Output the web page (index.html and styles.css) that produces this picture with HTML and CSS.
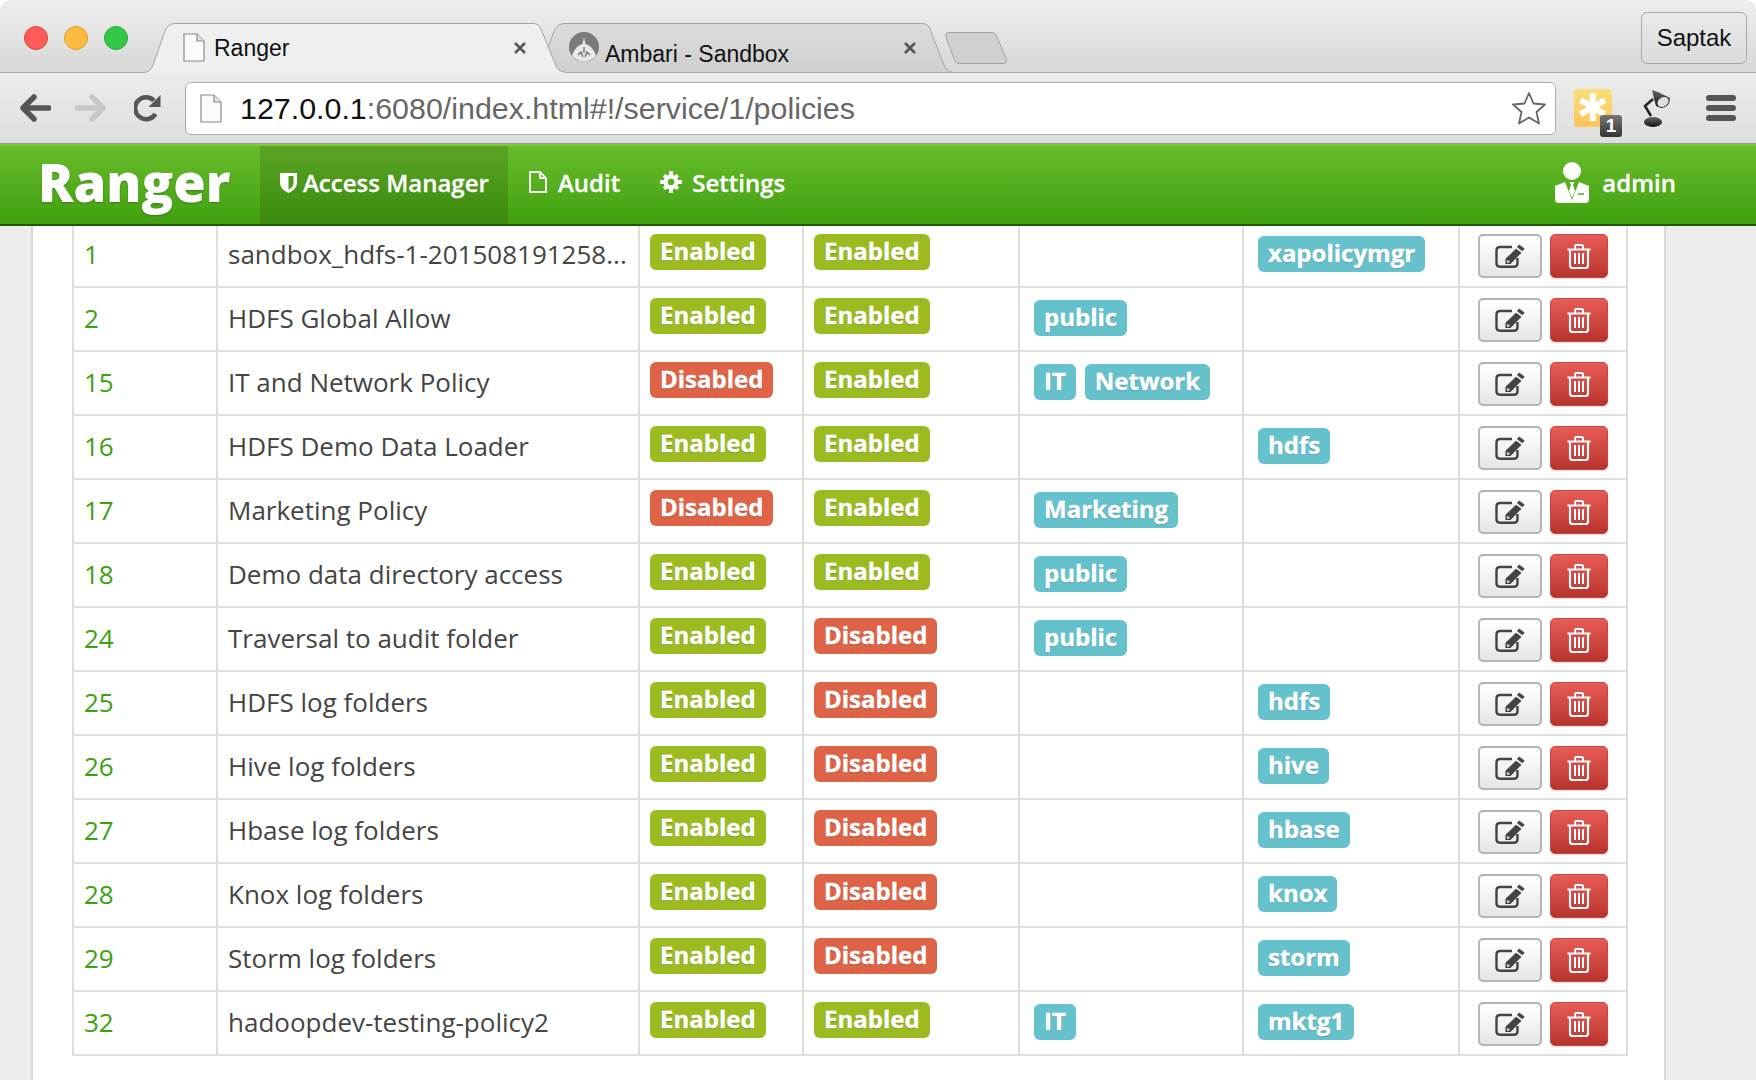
FILE: index.html
```html
<!DOCTYPE html>
<html lang="en">

<head>
    <meta charset="UTF-8">
    <meta name="viewport" content="width=device-width, initial-scale=1.0">
    <title>Ranger</title>
    <link rel="stylesheet" href="styles.css">
</head>

<body>

    <!-- Shared icons -->
    <svg class="icon-defs" width="0" height="0">
        <symbol id="icon-page" viewBox="0 0 22 29">
            <path d="M1 1H14L21 8V28H1Z" fill="#fbfbfb" stroke="#8a8a8a" stroke-width="1.2" />
            <path d="M14 1V8H21" fill="#e4e4e4" stroke="#8a8a8a" stroke-width="1.2" />
        </symbol>
        <symbol id="icon-close" viewBox="0 0 14 14">
            <path d="M2 2L12 12M12 2L2 12" stroke="#555" stroke-width="2.6" />
        </symbol>
        <symbol id="icon-edit" viewBox="0 0 30 24">
            <path d="M17 3H5Q1.500 3 1.500 6.500V19Q1.500 22.700 5 22.700H19Q22.500 22.700 22.500 19V14" fill="none" stroke="#444" stroke-width="2.400" />
            <path d="M24 0.500L29.500 4.500L27.500 7.300L22 3.300ZM21 4.700L26.500 8.700L15.500 20H10.500V14.800Z" fill="#444" />
            <path d="M12.300 15.800L14.800 17.700L13.800 18.700H12.300Z" fill="#fff" />
        </symbol>
        <symbol id="icon-trash" viewBox="0 0 24 25">
            <path d="M0.500 5.500H23.500M8 5V2.500Q8 1 9.500 1H14.500Q16 1 16 2.500V5" fill="none" stroke="#fff" stroke-width="2" />
            <path d="M3 6V21.500Q3 24 5.500 24H18.500Q21 24 21 21.500V6" fill="none" stroke="#fff" stroke-width="2.200" />
            <path d="M8 9V20M12 9V20M16 9V20" stroke="#fff" stroke-width="2" />
        </symbol>
    </svg>

    <!-- Tab strip -->
    <div class="tab-strip">
        <div class="window-buttons">
            <span class="dot dot-red"></span>
            <span class="dot dot-yellow"></span>
            <span class="dot dot-green"></span>
        </div>
        <div class="tabs">
            <div class="tab tab-active">
                <svg class="tab-shape" viewBox="0 0 420 50" preserveAspectRatio="none">
                    <path d="M0 49H1Q5 49 8 42L20 8Q23 0.500 30 0.500H388Q394 0.500 396 6L411 43Q414 49 420 49V50H0Z" fill="#efefef" />
                    <path d="M0 49H1Q5 49 8 42L20 8Q23 0.500 30 0.500H388Q394 0.500 396 6L411 43Q414 49 420 49" fill="none" stroke="#a2a2a2" />
                </svg>
                <svg class="tab-icon"><use href="#icon-page" /></svg>
                <span class="tab-title">Ranger</span>
                <svg class="tab-close"><use href="#icon-close" /></svg>
            </div>
            <div class="tab tab-other">
                <svg class="tab-shape" viewBox="0 0 422 49" preserveAspectRatio="none">
                    <defs>
                        <linearGradient id="tab-fill" x1="0" y1="0" x2="0" y2="1">
                            <stop offset="0" stop-color="#dcdcdc" />
                            <stop offset="1" stop-color="#cfcfcf" />
                        </linearGradient>
                    </defs>
                    <path d="M0 49H3Q9 49 12 42L24 8Q27 0.500 35 0.500H392Q398 0.500 400 6L414 42Q417 49 422 49" fill="url(#tab-fill)" stroke="#a2a2a2" />
                </svg>
                <svg class="tab-favicon" viewBox="0 0 30 30">
                    <circle cx="15" cy="15" r="15" fill="#7b7b7b" />
                    <path d="M15 5L16.500 12Q24 14 27 24Q22 29 15 30Q8 29 3 24Q6 14 13.500 12Z" fill="#e9e9e9" />
                    <path d="M15 15V21M9 23L12 20L14 25M21 23L18 20L16 25" stroke="#7b7b7b" stroke-width="1.500" fill="none" />
                </svg>
                <span class="tab-title tab-title-low">Ambari - Sandbox</span>
                <svg class="tab-close"><use href="#icon-close" /></svg>
            </div>
            <div class="new-tab">
                <svg viewBox="0 0 62 32" width="62" height="32">
                    <path d="M4 0.500H47Q50 0.500 51.500 4L61 26Q62.500 31.500 58 31.500H15Q11 31.500 9.500 28L1 5Q0 0.500 4 0.500Z" fill="#d0d0d0" stroke="#a2a2a2" />
                </svg>
            </div>
        </div>
        <div class="profile-button">Saptak</div>
    </div>

    <!-- Toolbar -->
    <div class="toolbar">
        <svg class="nav-icon" viewBox="0 0 31 28" width="31" height="28">
            <path d="M14 3L3 14L14 25M4 14H29" fill="none" stroke="#555" stroke-width="5.500" stroke-linecap="round" stroke-linejoin="round" />
        </svg>
        <svg class="nav-icon" viewBox="0 0 31 28" width="31" height="28">
            <path d="M17 3L28 14L17 25M27 14H2" fill="none" stroke="#c8c8c8" stroke-width="5.500" stroke-linecap="round" stroke-linejoin="round" />
        </svg>
        <svg class="nav-icon" viewBox="0 0 27 28" width="27" height="28">
            <path d="M21.500 20A11 11 0 1 1 20 6.500" fill="none" stroke="#555" stroke-width="4.500" />
            <path d="M26.500 1V13H14.500Z" fill="#555" />
        </svg>
        <div class="omnibox">
            <svg class="omni-page"><use href="#icon-page" /></svg>
            <span class="url"><span class="url-host">127.0.0.1</span>:6080/index.html#!/service/1/policies</span>
            <svg class="star" viewBox="0 0 36 34" width="36" height="34">
                <path d="M18 2L22.500 12.500L34 13.500L25.500 21L28 32.500L18 26.500L8 32.500L10.500 21L2 13.500L13.500 12.500Z" fill="#fff" stroke="#666" stroke-width="1.800" stroke-linejoin="round" />
            </svg>
        </div>
        <div class="extension">
            <span class="ext-star">✱</span>
            <span class="ext-badge">1</span>
        </div>
        <svg class="lamp" viewBox="0 0 27 38" width="27" height="38">
            <defs>
                <linearGradient id="lamp-fill" x1="0" y1="0" x2="0" y2="1">
                    <stop offset="0" stop-color="#666" />
                    <stop offset="1" stop-color="#111" />
                </linearGradient>
            </defs>
            <path d="M9 1L15 3L27 9Q27 18 18 19L13 17L11 10Z" fill="url(#lamp-fill)" />
            <ellipse cx="20" cy="13" rx="6" ry="4.500" fill="#ddd" transform="rotate(-35 20 13)" />
            <path d="M10 10L2 17L8 27" fill="none" stroke="#222" stroke-width="2.500" />
            <ellipse cx="10" cy="33" rx="9" ry="5" fill="url(#lamp-fill)" />
        </svg>
        <div class="menu-button">
            <span></span>
            <span></span>
            <span></span>
        </div>
    </div>

    <!-- Ranger nav bar -->
    <div class="navbar">
        <div class="brand">Ranger</div>
        <a class="nav-item nav-item-active">
            <svg viewBox="0 0 17 21" width="17" height="21">
                <path d="M0 1H17V11Q17 17 8.500 21Q0 17 0 11Z" fill="#fff" />
                <path d="M8.500 4H13.500V11Q13.500 15 8.500 17.500Z" fill="#4c9a18" />
            </svg>
            Access Manager
        </a>
        <a class="nav-item">
            <svg viewBox="0 0 18 22" width="18" height="22">
                <path d="M1 1H11L17 7V21H1Z M11 1V7H17" fill="none" stroke="#fff" stroke-width="1.800" />
            </svg>
            Audit
        </a>
        <a class="nav-item">
            <svg viewBox="0 0 22 22" width="22" height="22">
                <path d="M11 3.500A7.500 7.500 0 1 0 11 18.500A7.500 7.500 0 1 0 11 3.500ZM11 7.800A3.200 3.200 0 1 1 11 14.200A3.200 3.200 0 1 1 11 7.800Z" fill="#fff" fill-rule="evenodd" />
                <path d="M9 0H13V4H9ZM9 18H13V22H9ZM0 9H4V13H0ZM18 9H22V13H18ZM2.800 5.600L5.600 2.800L8 5.500L5.500 8ZM14 16.500L16.500 14L19.200 16.400L16.400 19.200ZM16.400 2.800L19.200 5.600L16.500 8L14 5.500ZM5.500 14L8 16.500L5.600 19.200L2.800 16.400Z" fill="#fff" />
            </svg>
            Settings
        </a>
        <div class="nav-user">
            <svg viewBox="0 0 34 41" width="34" height="41">
                <circle cx="17" cy="9" r="9" fill="#fff" />
                <path d="M10 20L0 24Q0 24 0 28V37Q0 41 4 41H30Q34 41 34 37V28Q34 24 34 24L24 20L17 38Z" fill="#fff" />
                <path d="M14.500 20H19.500L18 23L20 29L17 36L14 29L16 23Z" fill="#fff" />
                <path d="M23 32H29" stroke="#4fa916" stroke-width="1.500" />
            </svg>
            admin
        </div>
    </div>

    <!-- Policy list -->
    <div class="page">
        <div class="panel">
            <table class="policy-table">
                <colgroup>
                    <col class="col-id">
                    <col class="col-name">
                    <col class="col-status">
                    <col class="col-audit">
                    <col class="col-groups">
                    <col class="col-users">
                    <col class="col-actions">
                </colgroup>
                <tbody>
                    <tr>
                        <td class="policy-id">1</td>
                        <td>sandbox_hdfs-1-201508191258...</td>
                        <td class="status"><span class="label label-on">Enabled</span></td>
                        <td class="status"><span class="label label-on">Enabled</span></td>
                        <td class="tags"></td>
                        <td class="tags"><span class="label label-tag">xapolicymgr</span></td>
                        <td class="actions"><div class="action-group"><button class="btn btn-edit"><svg><use href="#icon-edit" /></svg></button><button class="btn btn-delete"><svg><use href="#icon-trash" /></svg></button></div></td>
                    </tr>
                    <tr>
                        <td class="policy-id">2</td>
                        <td>HDFS Global Allow</td>
                        <td class="status"><span class="label label-on">Enabled</span></td>
                        <td class="status"><span class="label label-on">Enabled</span></td>
                        <td class="tags"><span class="label label-tag">public</span></td>
                        <td class="tags"></td>
                        <td class="actions"><div class="action-group"><button class="btn btn-edit"><svg><use href="#icon-edit" /></svg></button><button class="btn btn-delete"><svg><use href="#icon-trash" /></svg></button></div></td>
                    </tr>
                    <tr>
                        <td class="policy-id">15</td>
                        <td>IT and Network Policy</td>
                        <td class="status"><span class="label label-off">Disabled</span></td>
                        <td class="status"><span class="label label-on">Enabled</span></td>
                        <td class="tags"><span class="label label-tag">IT</span><span class="label label-tag">Network</span></td>
                        <td class="tags"></td>
                        <td class="actions"><div class="action-group"><button class="btn btn-edit"><svg><use href="#icon-edit" /></svg></button><button class="btn btn-delete"><svg><use href="#icon-trash" /></svg></button></div></td>
                    </tr>
                    <tr>
                        <td class="policy-id">16</td>
                        <td>HDFS Demo Data Loader</td>
                        <td class="status"><span class="label label-on">Enabled</span></td>
                        <td class="status"><span class="label label-on">Enabled</span></td>
                        <td class="tags"></td>
                        <td class="tags"><span class="label label-tag">hdfs</span></td>
                        <td class="actions"><div class="action-group"><button class="btn btn-edit"><svg><use href="#icon-edit" /></svg></button><button class="btn btn-delete"><svg><use href="#icon-trash" /></svg></button></div></td>
                    </tr>
                    <tr>
                        <td class="policy-id">17</td>
                        <td>Marketing Policy</td>
                        <td class="status"><span class="label label-off">Disabled</span></td>
                        <td class="status"><span class="label label-on">Enabled</span></td>
                        <td class="tags"><span class="label label-tag">Marketing</span></td>
                        <td class="tags"></td>
                        <td class="actions"><div class="action-group"><button class="btn btn-edit"><svg><use href="#icon-edit" /></svg></button><button class="btn btn-delete"><svg><use href="#icon-trash" /></svg></button></div></td>
                    </tr>
                    <tr>
                        <td class="policy-id">18</td>
                        <td>Demo data directory access</td>
                        <td class="status"><span class="label label-on">Enabled</span></td>
                        <td class="status"><span class="label label-on">Enabled</span></td>
                        <td class="tags"><span class="label label-tag">public</span></td>
                        <td class="tags"></td>
                        <td class="actions"><div class="action-group"><button class="btn btn-edit"><svg><use href="#icon-edit" /></svg></button><button class="btn btn-delete"><svg><use href="#icon-trash" /></svg></button></div></td>
                    </tr>
                    <tr>
                        <td class="policy-id">24</td>
                        <td>Traversal to audit folder</td>
                        <td class="status"><span class="label label-on">Enabled</span></td>
                        <td class="status"><span class="label label-off">Disabled</span></td>
                        <td class="tags"><span class="label label-tag">public</span></td>
                        <td class="tags"></td>
                        <td class="actions"><div class="action-group"><button class="btn btn-edit"><svg><use href="#icon-edit" /></svg></button><button class="btn btn-delete"><svg><use href="#icon-trash" /></svg></button></div></td>
                    </tr>
                    <tr>
                        <td class="policy-id">25</td>
                        <td>HDFS log folders</td>
                        <td class="status"><span class="label label-on">Enabled</span></td>
                        <td class="status"><span class="label label-off">Disabled</span></td>
                        <td class="tags"></td>
                        <td class="tags"><span class="label label-tag">hdfs</span></td>
                        <td class="actions"><div class="action-group"><button class="btn btn-edit"><svg><use href="#icon-edit" /></svg></button><button class="btn btn-delete"><svg><use href="#icon-trash" /></svg></button></div></td>
                    </tr>
                    <tr>
                        <td class="policy-id">26</td>
                        <td>Hive log folders</td>
                        <td class="status"><span class="label label-on">Enabled</span></td>
                        <td class="status"><span class="label label-off">Disabled</span></td>
                        <td class="tags"></td>
                        <td class="tags"><span class="label label-tag">hive</span></td>
                        <td class="actions"><div class="action-group"><button class="btn btn-edit"><svg><use href="#icon-edit" /></svg></button><button class="btn btn-delete"><svg><use href="#icon-trash" /></svg></button></div></td>
                    </tr>
                    <tr>
                        <td class="policy-id">27</td>
                        <td>Hbase log folders</td>
                        <td class="status"><span class="label label-on">Enabled</span></td>
                        <td class="status"><span class="label label-off">Disabled</span></td>
                        <td class="tags"></td>
                        <td class="tags"><span class="label label-tag">hbase</span></td>
                        <td class="actions"><div class="action-group"><button class="btn btn-edit"><svg><use href="#icon-edit" /></svg></button><button class="btn btn-delete"><svg><use href="#icon-trash" /></svg></button></div></td>
                    </tr>
                    <tr>
                        <td class="policy-id">28</td>
                        <td>Knox log folders</td>
                        <td class="status"><span class="label label-on">Enabled</span></td>
                        <td class="status"><span class="label label-off">Disabled</span></td>
                        <td class="tags"></td>
                        <td class="tags"><span class="label label-tag">knox</span></td>
                        <td class="actions"><div class="action-group"><button class="btn btn-edit"><svg><use href="#icon-edit" /></svg></button><button class="btn btn-delete"><svg><use href="#icon-trash" /></svg></button></div></td>
                    </tr>
                    <tr>
                        <td class="policy-id">29</td>
                        <td>Storm log folders</td>
                        <td class="status"><span class="label label-on">Enabled</span></td>
                        <td class="status"><span class="label label-off">Disabled</span></td>
                        <td class="tags"></td>
                        <td class="tags"><span class="label label-tag">storm</span></td>
                        <td class="actions"><div class="action-group"><button class="btn btn-edit"><svg><use href="#icon-edit" /></svg></button><button class="btn btn-delete"><svg><use href="#icon-trash" /></svg></button></div></td>
                    </tr>
                    <tr>
                        <td class="policy-id">32</td>
                        <td>hadoopdev-testing-policy2</td>
                        <td class="status"><span class="label label-on">Enabled</span></td>
                        <td class="status"><span class="label label-on">Enabled</span></td>
                        <td class="tags"><span class="label label-tag">IT</span></td>
                        <td class="tags"><span class="label label-tag">mktg1</span></td>
                        <td class="actions"><div class="action-group"><button class="btn btn-edit"><svg><use href="#icon-edit" /></svg></button><button class="btn btn-delete"><svg><use href="#icon-trash" /></svg></button></div></td>
                    </tr>
                </tbody>
            </table>
        </div>
    </div>

</body>

</html>
```

FILE: styles.css
```css
/* Basic reset */
* {
    margin: 0;
    padding: 0;
    box-sizing: border-box;
}

body {
    display: flex;
    flex-direction: column;
    height: 100vh;
    overflow: hidden;
    background-color: #fff;
    font-family: "Open Sans", sans-serif;
    color: #444;
}

.icon-defs {
    position: absolute;
}

/* Tab strip */
.tab-strip {
    position: relative;
    z-index: 1;
    display: flex;
    flex: 0 0 72px;
    height: 72px;
    background: linear-gradient(#eeeeee, #d8d8d8);
    border-radius: 10px 10px 0 0;
    font-family: "Liberation Sans", Arial, sans-serif;
    color: #111;
}

.window-buttons {
    display: flex;
    gap: 16px;
    width: 145px;
    padding: 26px 0 0 24px;
}

.dot {
    width: 24px;
    height: 24px;
    border-radius: 50%;
}

.dot-red {
    background-color: #fc5b57;
    border: 1px solid #e0443e;
}

.dot-yellow {
    background-color: #fdbc40;
    border: 1px solid #de9f34;
}

.dot-green {
    background-color: #33c748;
    border: 1px solid #27aa35;
}

.tabs {
    display: flex;
    flex: 1;
    padding-top: 23px;
}

.tab {
    position: relative;
    display: flex;
    align-items: center;
    height: 49px;
}

.tab-shape {
    position: absolute;
    top: 0;
    left: 0;
    width: 100%;
    height: 100%;
}

.tab-active {
    z-index: 2;
    width: 420px;
    height: 50px;
    padding: 0 5px 1px 38px;
}

.tab-other {
    z-index: 1;
    width: 422px;
    margin-left: -35px;
    padding-left: 39px;
}

.tab-icon {
    position: relative;
    width: 22px;
    height: 29px;
    margin-right: 9px;
}

.tab-favicon {
    position: relative;
    width: 30px;
    height: 30px;
    margin: -2px 6px 0 0;
}

.tab-title {
    position: relative;
    flex: 1;
    font-size: 23px;
    line-height: 28px;
}

.tab-title-low {
    top: 6px;
}

.tab-close {
    position: relative;
    flex: none;
    width: 14px;
    height: 14px;
    margin-right: 33px;
}

.tab-other .tab-close {
    margin-right: 35px;
}

.new-tab {
    height: 32px;
    margin: 9px 0 0 -7px;
}

.profile-button {
    flex: none;
    align-self: flex-start;
    width: 106px;
    height: 52px;
    margin: 12px 9px 0 0;
    border: 1px solid #a8a8a8;
    border-radius: 6px;
    font-size: 24px;
    line-height: 50px;
    text-align: center;
}

/* Toolbar */
.toolbar {
    display: flex;
    flex: 0 0 72px;
    align-items: center;
    height: 72px;
    padding-left: 20px;
    background: linear-gradient(#ececec, #dedede);
    border-top: 1px solid #a8a8a8;
    border-bottom: 1px solid #9c9c9c;
    font-family: "Liberation Sans", Arial, sans-serif;
}

.nav-icon {
    flex: none;
    margin-right: 24px;
}

.nav-icon + .nav-icon + .nav-icon {
    margin-right: 24px;
    margin-left: 4px;
}

.omnibox {
    display: flex;
    align-items: center;
    width: 1371px;
    height: 53px;
    padding: 0 8px 0 14px;
    background-color: #fff;
    border: 1px solid #acacac;
    border-radius: 6px;
}

.omni-page {
    flex: none;
    width: 22px;
    height: 29px;
    margin-right: 18px;
}

.url {
    flex: 1;
    font-size: 30.4px;
    color: #666;
}

.url-host {
    color: #111;
}

.extension {
    position: relative;
    width: 38px;
    height: 38px;
    margin-left: 18px;
    background: linear-gradient(#f8df7a, #fdc45a);
    border-radius: 3px;
    overflow: visible;
    color: #fff;
    text-align: center;
}

.ext-star {
    font-family: "DejaVu Sans", sans-serif;
    font-size: 38px;
    line-height: 38px;
}

.ext-badge {
    position: absolute;
    right: -10px;
    bottom: -10px;
    width: 22px;
    height: 22px;
    background: linear-gradient(#777, #333);
    border-radius: 3px;
    font-size: 19px;
    font-weight: bold;
    line-height: 22px;
}

.lamp {
    flex: none;
    margin-left: 31px;
}

.menu-button {
    display: flex;
    flex-direction: column;
    gap: 4px;
    width: 30px;
    margin-left: 36px;
}

.menu-button span {
    height: 6px;
    background-color: #555;
    border-radius: 3px;
}

/* Ranger nav bar */
.navbar {
    display: flex;
    flex: 0 0 82px;
    height: 82px;
    background: linear-gradient(#68bc2a, #41a010);
    border-top: 2px solid #7ccb3c;
    border-bottom: 2px solid #1f5a03;
    color: #fff;
}

.brand {
    width: 260px;
    padding-left: 38px;
    font-family: "Open Sans", sans-serif;
    font-size: 52.5px;
    font-weight: 800;
    line-height: 72px;
    text-shadow: 0 1px 2px rgba(0, 0, 0, 0.25);
}

.nav-item {
    display: flex;
    align-items: center;
    gap: 6px;
    padding: 0 19px 6px;
    font-size: 24px;
    font-weight: 600;
    white-space: nowrap;
    -webkit-text-stroke: 0.3px #fff;
}

.nav-item + .nav-item {
    gap: 11px;
    padding-left: 21px;
}

.nav-item + .nav-item + .nav-item {
    gap: 10px;
}

.nav-item-active {
    width: 248px;
    padding-left: 20px;
    background: linear-gradient(#5aa424, #3a8a0d);
}

.nav-user {
    display: flex;
    align-items: center;
    gap: 13px;
    margin-left: auto;
    padding: 0 80px 6px 0;
    font-size: 24px;
    font-weight: 600;
    -webkit-text-stroke: 0.3px #fff;
}

/* Policy list */
.page {
    flex: 1;
    overflow: hidden;
    padding-left: 31px;
    background-color: #ededed;
}

.panel {
    display: flow-root;
    width: 1635px;
    height: 100%;
    padding-left: 39px;
    background-color: #fff;
    border-left: 2px solid #d8d8d8;
    border-right: 2px solid #d8d8d8;
}

.policy-table {
    width: 1556px;
    margin-top: -4px;
    border-collapse: collapse;
    table-layout: fixed;
    font-size: 26px;
}

.col-id {
    width: 144px;
}

.col-name {
    width: 422px;
}

.col-status {
    width: 164px;
}

.col-audit {
    width: 216px;
}

.col-groups {
    width: 224px;
}

.col-users {
    width: 216px;
}

.col-actions {
    width: 168px;
}

.policy-table td {
    height: 64px;
    padding: 0 10px 2px;
    border: 2px solid #dddddd;
    white-space: nowrap;
}

.policy-id {
    color: #3aa30e;
}

.policy-table .status {
    padding-top: 8px;
    vertical-align: top;
}

.policy-table .tags {
    padding: 10px 14px 0;
    vertical-align: top;
}

.policy-table .actions {
    padding: 2px 18px 0;
}

/* Labels */
.label {
    display: inline-block;
    height: 36px;
    padding: 0 10px;
    border-radius: 6px;
    color: #fff;
    font-size: 24px;
    font-weight: 700;
    line-height: 34px;
    text-shadow: 0 1px 1px rgba(0, 0, 0, 0.25);
    -webkit-text-stroke: 0.4px #fff;
}

.label-on {
    background-color: #9cbb20;
}

.label-off {
    background-color: #df6346;
}

.label-tag {
    margin-right: 9px;
    background-color: #65c1cc;
}

/* Action buttons */
.action-group {
    display: flex;
    gap: 8px;
}

.btn {
    display: flex;
    align-items: center;
    justify-content: center;
    height: 44px;
    border-radius: 5px;
}

.btn-edit {
    width: 64px;
    background: linear-gradient(#ffffff, #e6e6e6);
    border: 2px solid #b4b4b4;
}

.btn-edit svg {
    width: 30px;
    height: 24px;
}

.btn-delete {
    width: 58px;
    background: linear-gradient(#e85c58, #b7332b);
    border: 1px solid #c04a44;
    box-shadow: 0 1px 2px rgba(0, 0, 0, 0.15);
}

.btn-delete svg {
    width: 24px;
    height: 25px;
}
```
